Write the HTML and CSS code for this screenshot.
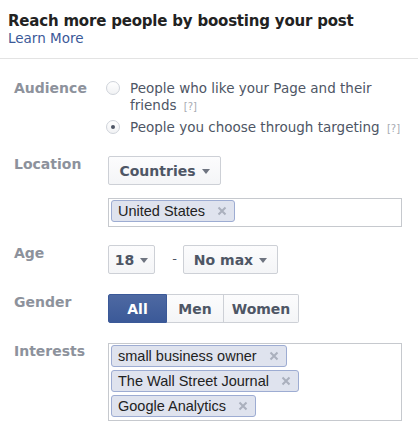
FILE: index.html
```html
<!DOCTYPE html>
<html>
<head>
<meta charset="utf-8">
<link rel="stylesheet" href="styles.css">
</head>
<body>
<div class="header">
  <div class="title">Reach more people by boosting your post</div>
  <a class="learn" href="#">Learn More</a>
</div>
<div class="form">
  <div class="label">Audience</div>
  <div class="ctl c-audience">
    <div class="radio">
      <span class="circle"></span>
      <span class="rtext">People who like your Page and their friends <span class="help">[?]</span></span>
    </div>
    <div class="radio">
      <span class="circle on"></span>
      <span class="rtext nowrap">People you choose through targeting <span class="help">[?]</span></span>
    </div>
  </div>

  <div class="label gap20">Location</div>
  <div class="ctl gap20 c-location">
    <div class="btn countries">Countries <span class="caret"></span></div>
    <div class="tokens tk-loc">
      <span class="token">United States <svg class="x" viewBox="0 0 10 10"><path d="M1.5 1.5L8.5 8.5M8.5 1.5L1.5 8.5"/></svg></span>
    </div>
  </div>

  <div class="label gap18">Age</div>
  <div class="ctl gap18 c-age">
    <div class="btn age-min">18 <span class="caret"></span></div>
    <span class="dash">-</span>
    <div class="btn age-max">No max <span class="caret"></span></div>
  </div>

  <div class="label gap20">Gender</div>
  <div class="ctl gap20">
    <div class="seg">
      <span class="seg-btn active s-all">All</span>
      <span class="seg-btn s-men">Men</span>
      <span class="seg-btn s-women">Women</span>
    </div>
  </div>

  <div class="label gap20">Interests</div>
  <div class="ctl gap20">
    <div class="tokens tk-int">
      <span class="token">small business owner <svg class="x" viewBox="0 0 10 10"><path d="M1.5 1.5L8.5 8.5M8.5 1.5L1.5 8.5"/></svg></span>
      <span class="token">The Wall Street Journal <svg class="x" viewBox="0 0 10 10"><path d="M1.5 1.5L8.5 8.5M8.5 1.5L1.5 8.5"/></svg></span>
      <span class="token">Google Analytics <svg class="x" viewBox="0 0 10 10"><path d="M1.5 1.5L8.5 8.5M8.5 1.5L1.5 8.5"/></svg></span>
    </div>
  </div>
</div>
</body>
</html>
```

FILE: styles.css
```css
html, body {
  margin: 0;
  padding: 0;
  background: #fff;
}
body {
  font-family: "DejaVu Sans", "Liberation Sans", sans-serif;
  color: #4e5665;
  width: 418px;
  height: 425px;
  overflow: hidden;
}
.header {
  padding: 12px 8px 0 8px;
  height: 46px;
  border-bottom: 1px solid #e3e3e3;
}
.title {
  font-weight: bold;
  font-size: 15px;
  line-height: 18px;
  color: #222;
  letter-spacing: -0.2px;
}
.learn {
  display: block;
  font-size: 13.5px;
  line-height: 16px;
  color: #3b5998;
  text-decoration: none;
}
.form {
  display: grid;
  grid-template-columns: 94px 294px;
  align-items: start;
  padding: 21px 0 0 14px;
}
.label {
  font-weight: bold;
  font-size: 14px;
  color: #8d929c;
  line-height: 17px;
}
.gap20 { margin-top: 20px; }
.gap18 { margin-top: 18px; }
.ctl {
  display: flex;
  flex-direction: column;
}
.radio {
  display: flex;
  align-items: flex-start;
  gap: 10px;
  margin-left: -2px;
  font-size: 13.5px;
  line-height: 17px;
  color: #4e5665;
}
.radio + .radio {
  margin-top: 5px;
}
.circle {
  flex: none;
  width: 12px;
  height: 12px;
  border: 1px solid #cfd3da;
  border-radius: 50%;
  background: linear-gradient(#fff, #f1f2f4);
  margin-top: 1px;
  position: relative;
}
.circle.on::after {
  content: "";
  position: absolute;
  left: 4px;
  top: 4px;
  width: 4px;
  height: 4px;
  border-radius: 50%;
  background: #4e5665;
}
.rtext {
  width: 282px;
}
.nowrap { white-space: nowrap; }
.help {
  font-size: 10px;
  line-height: 10px;
  color: #a7abb2;
  margin-left: 3px;
}
.c-location { align-items: flex-start; }
.btn {
  display: flex;
  align-items: center;
  justify-content: center;
  white-space: nowrap;
  box-sizing: border-box;
  height: 29px;
  padding: 0 8px;
  border: 1px solid #cdd0d6;
  border-radius: 2px;
  background: linear-gradient(#fcfcfd, #f4f5f7);
  font-weight: bold;
  font-size: 14px;
  color: #4e5665;
}
.caret {
  display: inline-block;
  width: 0;
  height: 0;
  border-left: 4.5px solid transparent;
  border-right: 4.5px solid transparent;
  border-top: 5px solid #6e7480;
  margin-left: 6px;
  margin-top: 1px;
}
.countries { width: 113px; }
.tokens {
  box-sizing: border-box;
  width: 294px;
  border: 1px solid #c6c9ce;
  background: #fff;
  display: flex;
  flex-wrap: wrap;
  align-content: flex-start;
  align-items: flex-start;
  gap: 3px;
  padding: 1px 2px;
}
.tk-loc { margin-top: 13px; height: 29px; }
.tk-int { height: 78px; }
.token {
  display: inline-flex;
  align-items: center;
  box-sizing: border-box;
  height: 22px;
  padding: 0 7px 0 6px;
  border: 1px solid #9dacd2;
  border-radius: 3px;
  background: #dfe3ee;
  font-family: "Liberation Sans", Arial, sans-serif;
  font-size: 14.5px;
  color: #222;
}
.token .x {
  width: 10px;
  height: 10px;
  margin-left: 12px;
  fill: none;
  stroke: #aab0bd;
  stroke-width: 2;
}
.c-age { flex-direction: row; align-items: center; }
.age-min { width: 47px; }
.age-max { width: 95px; }
.dash {
  box-sizing: border-box;
  width: 28px;
  padding-right: 6px;
  text-align: right;
  font-size: 13px;
  color: #4e5665;
  margin-top: -3px;
}
.seg {
  display: flex;
  height: 29px;
}
.seg-btn {
  display: flex;
  align-items: center;
  justify-content: center;
  box-sizing: border-box;
  height: 29px;
  border: 1px solid #cdd0d6;
  border-left: none;
  background: linear-gradient(#fcfcfd, #f4f5f7);
  font-weight: bold;
  font-size: 14px;
  color: #4e5665;
}
.s-all {
  width: 59px;
  border: 1px solid #3b5998;
  border-radius: 2px 0 0 2px;
  background: linear-gradient(#4e69a2, #3b5998);
  color: #fff;
}
.s-men { width: 57px; }
.s-women { width: 75px; border-radius: 0 2px 2px 0; }
```
